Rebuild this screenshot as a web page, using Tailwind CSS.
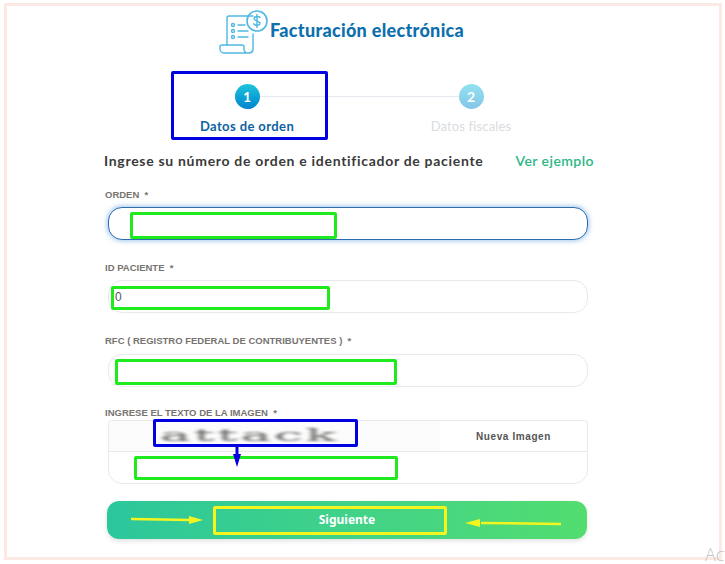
<!DOCTYPE html>
<html lang="es">
<head>
<meta charset="UTF-8">
<title>Facturación electrónica</title>
<script src="https://cdn.jsdelivr.net/npm/@tailwindcss/browser@4"></script>
</head>
<body class="bg-white font-['Lato',sans-serif] overflow-hidden">
<div class="relative w-[725px] h-[564px] overflow-hidden">
  <!-- screenshot frame -->
  <div class="ml-[4px] mt-[3px] w-[718px] h-[557px] border-[3px] border-[#fde9e3]">
    <div class="ml-[97px] w-[484px]">
      <!-- header -->
      <div class="flex items-center ml-[115px] h-[47px] mt-[3px]">
        <svg class="w-[49px] h-[45px] shrink-0" viewBox="0 0 49 45" fill="none" stroke="#4fb8e2" stroke-width="1.4" stroke-linecap="round" stroke-linejoin="round">
          <path d="M8 35V8a2 2 0 0 1 2-2h24" />
          <path d="M34 24v16a4 4 0 0 1-4 3H5a4 4 0 0 1-4-4v-2a2 2 0 0 1 2-2h20a2 2 0 0 1 2 2v2a4 4 0 0 0 5 4" />
          <circle cx="38" cy="11" r="10" stroke-width="1.6" />
          <path d="M41 7.500c-1-1.500-5.500-1.500-6 .8-.4 3 6.300 2 6 5.200-.4 2.300-5 2.300-6.300.3M38 4.500v13" />
          <circle cx="14" cy="15" r="1.500" /><circle cx="14" cy="21" r="1.500" /><circle cx="14" cy="27" r="1.500" />
          <path d="M19 15h7M19 21h10M19 27h10" />
        </svg>
        <h1 class="ml-[2px] text-[18px] font-black tracking-[0.3px] text-[#0d6fae] whitespace-nowrap -mt-[5px]">Facturación electrónica</h1>
      </div>
      <!-- stepper -->
      <div class="relative flex justify-between ml-[103px] w-[304px] mt-[28px] h-[52px]">
        <div class="absolute left-[40px] right-[40px] top-[12px] h-px bg-[#e4e8ef]"></div>
        <div class="relative w-[80px] flex flex-col items-center">
          <div class="w-[25px] h-[25px] rounded-full bg-gradient-to-b from-[#1fc4dc] to-[#0583cf] text-white text-[14px] font-bold flex items-center justify-center">1</div>
          <span class="mt-[8px] text-[13px] font-bold tracking-[0.4px] text-[#0d62a3] whitespace-nowrap">Datos de orden</span>
        </div>
        <div class="relative w-[80px] flex flex-col items-center">
          <div class="w-[25px] h-[25px] rounded-full bg-gradient-to-b from-[#92e1ee] to-[#84c6e9] text-white text-[14px] font-bold flex items-center justify-center">2</div>
          <span class="mt-[8px] text-[13px] tracking-[0.15px] text-[#d8dbe0] whitespace-nowrap">Datos fiscales</span>
        </div>
      </div>
      <!-- form title -->
      <div class="flex items-center justify-between mt-[14px] w-[490px]">
        <h2 class="text-[14px] font-bold text-[#3a3a3a] tracking-[0.7px] whitespace-nowrap">Ingrese su número de orden e identificador de paciente</h2>
        <a class="text-[14px] font-semibold tracking-[0.45px] text-[#2bb784] whitespace-nowrap">Ver ejemplo</a>
      </div>
      <!-- fields -->
      <label class="block mt-[17px] ml-px text-[9.5px] leading-[14px] font-bold text-[#77736f] font-['Liberation_Sans',sans-serif] whitespace-nowrap">ORDEN &nbsp;*</label>
      <div class="mt-[5px] ml-[4px] w-[480px] h-[33px] rounded-[14px] border border-[#2a6eb0] bg-white shadow-[0_0_5px_1px_rgba(80,150,220,0.55)]"></div>
      <label class="block mt-[21px] ml-px text-[9.5px] leading-[14px] font-bold text-[#77736f] font-['Liberation_Sans',sans-serif] whitespace-nowrap">ID PACIENTE &nbsp;*</label>
      <div class="mt-[5px] ml-[4px] w-[480px] h-[33px] rounded-[14px] border border-[#e8e9ee] bg-white flex items-center pl-[6px] text-[12px] text-[#55585c] font-['Liberation_Sans',sans-serif]">0</div>
      <label class="block mt-[21px] ml-px text-[9.5px] leading-[14px] font-bold text-[#77736f] font-['Liberation_Sans',sans-serif] whitespace-nowrap">RFC ( REGISTRO FEDERAL DE CONTRIBUYENTES ) &nbsp;*</label>
      <div class="mt-[6px] ml-[4px] w-[480px] h-[33px] rounded-[14px] border border-[#e8e9ee] bg-white"></div>
      <label class="block mt-[19px] ml-px text-[9.5px] leading-[14px] font-bold text-[#77736f] font-['Liberation_Sans',sans-serif] whitespace-nowrap">INGRESE EL TEXTO DE LA IMAGEN &nbsp;*</label>
      <!-- captcha -->
      <div class="ml-[4px] w-[480px] h-[64px] rounded-b-[14px] rounded-t-[4px] border border-[#e8e9ee] overflow-hidden">
        <div class="flex h-[31px] border-b border-[#e8e9ee]">
          <div class="w-[331px] bg-[#fcfcfc] flex items-center justify-center pr-[50px]">
            <span class="text-[17px] text-[#60605e] tracking-[1px] blur-[0.8px] font-['DejaVu_Serif',serif] scale-x-[3] whitespace-nowrap -mt-px">attack</span>
          </div>
          <div class="flex-1 flex items-center justify-center text-[10px] font-bold tracking-[0.6px] text-[#555] font-['Liberation_Sans',sans-serif]">Nueva Imagen</div>
        </div>
      </div>
      <!-- button -->
      <button class="block mt-[17px] ml-[3px] w-[480px] h-[38px] rounded-[12px] bg-gradient-to-r from-[#2bc79c] to-[#52dd6f] text-white text-[12px] font-bold shadow-[0_2px_5px_rgba(0,0,0,0.12)] font-['Noto_Sans',sans-serif]">Siguiente</button>
    </div>
  </div>

  <!-- hand drawn annotations on top of the screenshot -->
  <div class="absolute left-[171px] top-[71px] w-[157px] h-[69px] border-[3px] rounded-[2px] border-[#0000e0]"></div>
  <div class="absolute left-[130px] top-[212px] w-[207px] h-[27px] border-[3px] rounded-[2px] border-[#1eea1e]"></div>
  <div class="absolute left-[111px] top-[286px] w-[219px] h-[24px] border-[3px] rounded-[2px] border-[#1eea1e]"></div>
  <div class="absolute left-[115px] top-[359px] w-[282px] h-[26px] border-[3px] rounded-[2px] border-[#1eea1e]"></div>
  <div class="absolute left-[134px] top-[456px] w-[264px] h-[24px] border-[3px] rounded-[2px] border-[#1eea1e]"></div>
  <div class="absolute left-[153px] top-[419px] w-[205px] h-[28px] border-[3px] rounded-[2px] border-[#0000e0]"></div>
  <div class="absolute left-[213px] top-[506px] w-[234px] h-[29px] border-[3px] rounded-[2px] border-[#f4f41e]"></div>
  <svg class="absolute left-0 top-0 w-[725px] h-[564px] pointer-events-none" viewBox="0 0 725 564" fill="none">
    <path d="M237 446v14" stroke="#0000e0" stroke-width="3" />
    <path d="M233 454h8l-4 13z" fill="#0000e0" />
    <path d="M131 519l60 1" stroke="#f4f41e" stroke-width="2.500" />
    <path d="M189 516l14 4-14 4z" fill="#f4f41e" />
    <path d="M561 524l-80-1" stroke="#f4f41e" stroke-width="2.500" />
    <path d="M480 519l-15 4 15 4z" fill="#f4f41e" />
  </svg>
  <span class="absolute left-[705px] top-[541px] text-[18px] text-[#c4c4c4] font-['Open_Sans',sans-serif] font-light whitespace-nowrap">Activar</span>
</div>
</body>
</html>
